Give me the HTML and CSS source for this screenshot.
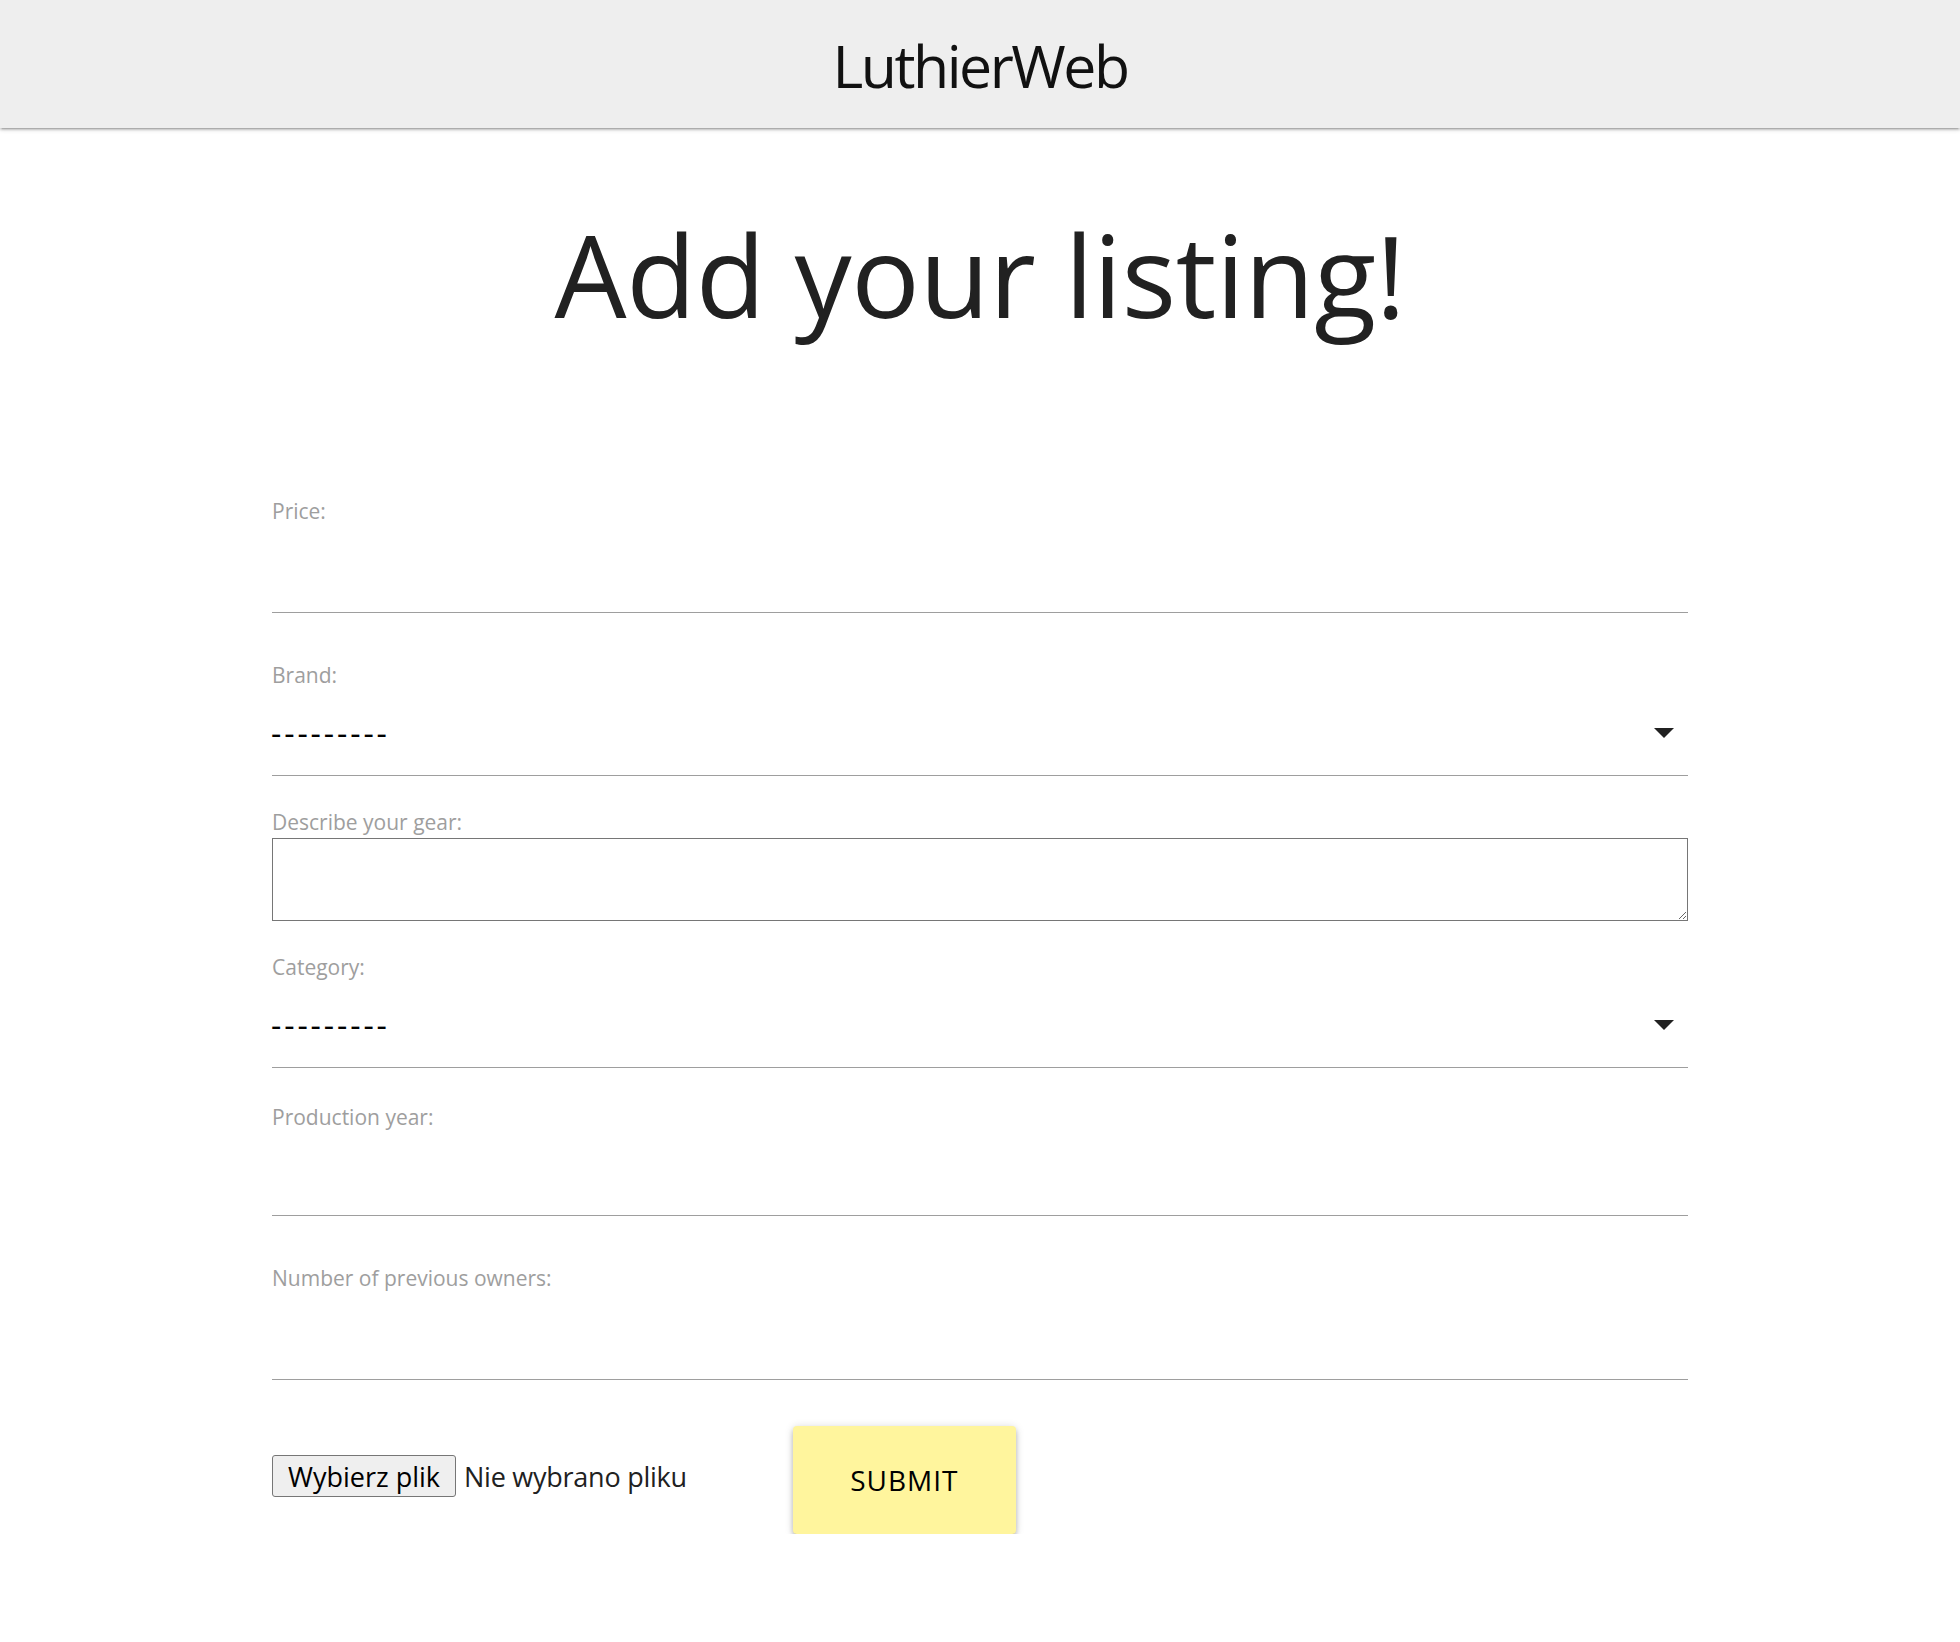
FILE: index.html
```html
<!DOCTYPE html>
<html lang="en">
<head>
<meta charset="utf-8">
<title>LuthierWeb</title>
<link rel="stylesheet" href="styles.css">
</head>
<body>
<header class="topbar">
  <div class="brand-logo">LuthierWeb</div>
</header>
<main class="page">
  <h1 class="page-title">Add your listing!</h1>
  <form class="listing-form">
    <label class="field-label" for="price">Price:</label>
    <input class="line-input" id="price" type="text">

    <label class="field-label gap-lg">Brand:</label>
    <div class="select-box">
      <span class="select-value">---------</span>
      <svg class="caret" width="20" height="10" viewBox="0 0 20 10"><polygon points="0,0 20,0 10,10" fill="#212121"/></svg>
    </div>

    <label class="field-label gap-sm" for="desc">Describe your gear:</label>
    <textarea class="gear-text" id="desc"></textarea>

    <label class="field-label gap-sm">Category:</label>
    <div class="select-box">
      <span class="select-value">---------</span>
      <svg class="caret" width="20" height="10" viewBox="0 0 20 10"><polygon points="0,0 20,0 10,10" fill="#212121"/></svg>
    </div>

    <label class="field-label gap-md" for="year">Production year:</label>
    <input class="line-input short" id="year" type="text">

    <label class="field-label gap-lg" for="owners">Number of previous owners:</label>
    <input class="line-input" id="owners" type="text">

    <div class="actions">
      <div class="file-field">
        <span class="file-btn">Wybierz plik</span>
        <span class="file-name">Nie wybrano pliku</span>
      </div>
      <button class="submit-btn" type="button">SUBMIT</button>
    </div>
  </form>
</main>
</body>
</html>
```

FILE: styles.css
```css
html, body {
  margin: 0;
  padding: 0;
  background: #ffffff;
}
body {
  font-family: "Open Sans", "Noto Sans", sans-serif;
  color: #212121;
}
.topbar {
  height: 128px;
  background: #eeeeee;
  display: flex;
  align-items: center;
  justify-content: center;
  box-shadow: 0 2px 2px 0 rgba(0,0,0,0.14), 0 3px 1px -2px rgba(0,0,0,0.12), 0 1px 5px 0 rgba(0,0,0,0.2);
  position: relative;
  z-index: 1;
}
.brand-logo {
  font-size: 59px;
  line-height: 59px;
  letter-spacing: -2.5px;
  color: #111111;
  padding-top: 2px;
}
.page {
  display: flex;
  flex-direction: column;
  align-items: center;
}
.page-title {
  margin: 89px 0 0 0;
  font-size: 114px;
  line-height: 114px;
  font-weight: 400;
  letter-spacing: -0.3px;
  color: #212121;
}
.listing-form {
  width: 1416px;
  margin-top: 168px;
  display: flex;
  flex-direction: column;
}
.field-label {
  display: block;
  font-size: 21px;
  line-height: 21px;
  padding-top: 2px;
  margin-bottom: -2px;
  color: #9e9e9e;
}
.gap-lg { margin-top: 50px; }
.gap-sm { margin-top: 34px; }
.gap-md { margin-top: 37px; }
.line-input {
  display: block;
  width: 100%;
  height: 93px;
  box-sizing: border-box;
  margin: 0;
  padding: 0;
  border: none;
  border-bottom: 1px solid #9e9e9e;
  background: transparent;
  outline: none;
  font-family: inherit;
  font-size: 24px;
}
.line-input.short {
  height: 90px;
}
.select-box {
  display: flex;
  justify-content: space-between;
  align-items: flex-start;
  height: 92px;
  box-sizing: border-box;
  padding-top: 33px;
  border-bottom: 1px solid #9e9e9e;
}
.select-value {
  font-size: 32px;
  line-height: 32px;
  letter-spacing: 2.9px;
  color: #000000;
  margin-left: -1px;
}
.caret {
  margin-top: 11px;
  margin-right: 14px;
  display: block;
}
.gear-text {
  display: block;
  width: 100%;
  height: 83px;
  box-sizing: border-box;
  margin: 7px 0 0 0;
  border: 1px solid #767676;
  border-radius: 0;
  padding: 4px;
  font-family: inherit;
  font-size: 20px;
  resize: both;
}
.actions {
  margin-top: 46px;
  display: flex;
  align-items: flex-start;
}
.file-field {
  margin-top: 29px;
  display: flex;
  align-items: center;
}
.file-btn {
  box-sizing: border-box;
  height: 42px;
  display: flex;
  align-items: center;
  padding: 0 15px;
  border: 1px solid #767676;
  border-radius: 3px;
  background: #efefef;
  font-size: 27px;
  color: #000000;
}
.file-name {
  margin-left: 8px;
  font-size: 27px;
  letter-spacing: -0.25px;
  color: #212121;
}
.submit-btn {
  margin-left: 106px;
  width: 223px;
  height: 108px;
  border: none;
  border-radius: 4px;
  background: #fff59d;
  font-family: inherit;
  font-size: 28px;
  letter-spacing: 1px;
  color: #000000;
  padding: 0;
  box-shadow: 0 4px 5px 0 rgba(0,0,0,0.2), 0 3px 1px -2px rgba(0,0,0,0.14), 0 1px 8px 0 rgba(0,0,0,0.16);
}
```
